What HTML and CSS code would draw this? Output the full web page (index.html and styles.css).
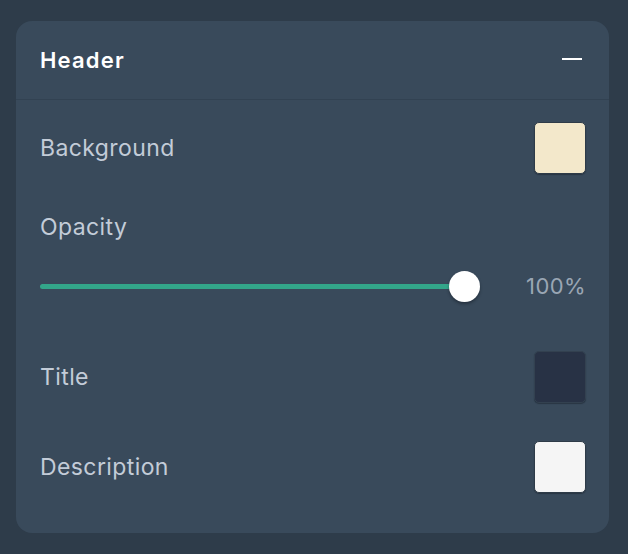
FILE: index.html
```html
<!DOCTYPE html>
<html lang="en">
<head>
<meta charset="utf-8">
<title>Header settings</title>
<link rel="stylesheet" href="styles.css">
</head>
<body>
<section class="card">
  <header class="card-head">
    <h2 class="card-title">Header</h2>
    <button class="collapse" aria-label="Collapse">
      <svg width="20" height="2" viewBox="0 0 20 2"><rect x="0" y="0" width="20" height="2" fill="#ffffff"/></svg>
    </button>
  </header>
  <div class="card-body">
    <div class="row">
      <span class="label">Background</span>
      <span class="swatch swatch-cream"></span>
    </div>
    <div class="label opacity-label">Opacity</div>
    <div class="slider-row">
      <div class="track">
        <div class="fill" style="width: calc(100% - 16px)"></div>
        <div class="thumb"></div>
      </div>
      <span class="value">100%</span>
    </div>
    <div class="row row-title">
      <span class="label">Title</span>
      <span class="swatch swatch-navy"></span>
    </div>
    <div class="row row-desc">
      <span class="label">Description</span>
      <span class="swatch swatch-white"></span>
    </div>
  </div>
</section>
</body>
</html>
```

FILE: styles.css
```css
html, body {
  margin: 0;
  padding: 0;
}
body {
  background: #2e3c4a;
  width: 628px;
  height: 554px;
  padding: 21px 19px 0 16px;
  box-sizing: border-box;
  font-family: "Inter", "Noto Sans", sans-serif;
}
.card {
  background: #394a5b;
  border-radius: 16px;
  height: 512px;
  box-sizing: border-box;
}
.card-head {
  height: 78px;
  border-bottom: 1px solid #324252;
  display: flex;
  align-items: center;
  justify-content: space-between;
  padding: 0 27px 0 24px;
}
.card-title {
  margin: 0;
  font-size: 22px;
  font-weight: 600;
  color: #ffffff;
  letter-spacing: 1.2px;
  line-height: 28px;
}
.collapse {
  background: none;
  border: 0;
  padding: 0;
  margin: 0;
  display: flex;
  align-items: center;
  cursor: pointer;
  position: relative;
  top: -1px;
}
.card-body {
  display: flex;
  flex-direction: column;
  padding: 22px 23px 0 24px;
}
.row {
  display: flex;
  align-items: center;
  justify-content: space-between;
  height: 52px;
}
.label {
  font-size: 23px;
  line-height: 28px;
  color: #c3ccd8;
  letter-spacing: 0.4px;
}
.swatch {
  width: 50px;
  height: 50px;
  border-radius: 5px;
  border: 1px solid #2e3b48;
  box-shadow: 0 1px 1px rgba(20, 28, 38, 0.45);
}
.swatch-cream { background: #f3e8cb; }
.swatch-navy { background: #283245; border-color: #334150; }
.swatch-white { background: #f5f5f5; }
.opacity-label {
  margin-top: 39px;
}
.slider-row {
  display: flex;
  align-items: center;
  margin-top: 29px;
  height: 32px;
}
.track {
  flex: 1;
  position: relative;
  height: 5px;
}
.fill {
  height: 5px;
  background: #33a68a;
  border-radius: 3px;
}
.thumb {
  position: absolute;
  right: 0;
  top: 50%;
  width: 31px;
  height: 31px;
  margin-top: -15.5px;
  border-radius: 50%;
  background: #ffffff;
  box-shadow: 0 2px 3px rgba(15, 22, 30, 0.45);
}
.value {
  width: 60px;
  margin-left: 46px;
  text-align: right;
  font-size: 22px;
  line-height: 28px;
  color: #9aa6b4;
  letter-spacing: 0.4px;
}
.row-title {
  margin-top: 49px;
}
.row-desc {
  margin-top: 38px;
}
```
